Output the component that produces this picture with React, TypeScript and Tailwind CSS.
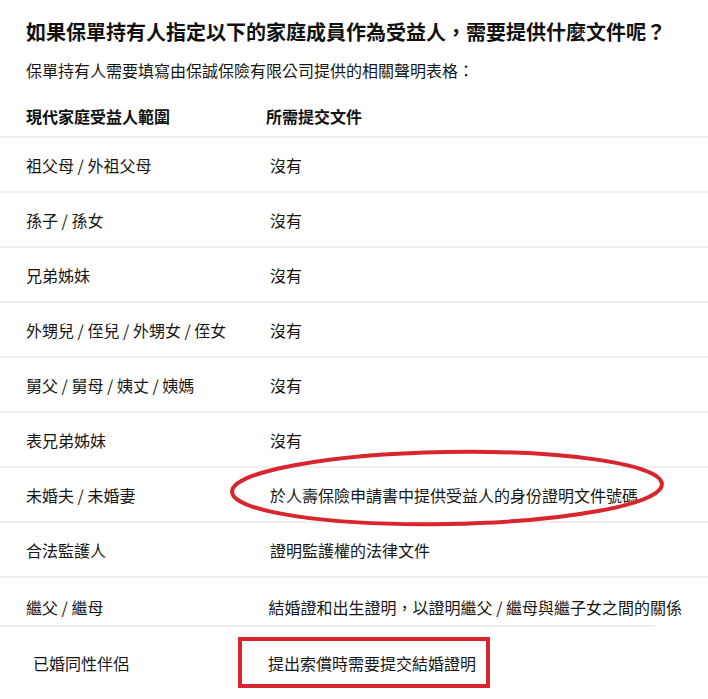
import React from "react";

const rows: [string, string][] = [
  ["祖父母 / 外祖父母", "沒有"],
  ["孫子 / 孫女", "沒有"],
  ["兄弟姊妹", "沒有"],
  ["外甥兒 / 侄兒 / 外甥女 / 侄女", "沒有"],
  ["舅父 / 舅母 / 姨丈 / 姨媽", "沒有"],
  ["表兄弟姊妹", "沒有"],
  ["未婚夫 / 未婚妻", "於人壽保險申請書中提供受益人的身份證明文件號碼"],
  ["合法監護人", "證明監護權的法律文件"],
];

export default function App() {
  return (
    <div
      className="relative w-[708px] h-[699px] overflow-hidden bg-white text-[#161616]"
      style={{ fontFamily: '"Noto Sans CJK TC", "Noto Sans", sans-serif' }}
    >
      <div className="px-[26px] pt-[18px]">
        <h1 className="text-[20px] leading-[28px] font-bold text-[#111]">
          如果保單持有人指定以下的家庭成員作為受益人，需要提供什麼文件呢？
        </h1>
        <p className="mt-[12px] text-[16px] leading-[24px]">
          保單持有人需要填寫由保誠保險有限公司提供的相關聲明表格：
        </p>
      </div>

      <div className="mt-[22px] flex h-[32px] px-[26px] text-[16px] leading-[24px] font-bold text-[#111]">
        <div className="w-[240px]">現代家庭受益人範圍</div>
        <div>所需提交文件</div>
      </div>

      {rows.map(([who, doc]) => (
        <div
          key={who}
          className="flex h-[55px] items-center border-t-2 border-[#eeeeee] px-[26px] text-[16px] leading-[24px]"
        >
          <div className="w-[244px]">{who}</div>
          <div>{doc}</div>
        </div>
      ))}

      <div className="border-t-2 border-[#eeeeee] px-[26px] pt-[17px] pb-[6px] text-[16px] leading-[24px]">
        <div className="flex">
          <div className="w-[243px]">繼父 / 繼母</div>
          <div className="whitespace-nowrap">結婚證和出生證明，以證明繼父 / 繼母與繼子女之間的關係</div>
        </div>
      </div>
      <div className="w-[655px] border-t-2 border-[#eeeeee]" />
      <div className="flex pl-[33px] pt-[24px] text-[16px] leading-[24px]">
        <div className="w-[235px]">已婚同性伴侶</div>
        <div>提出索償時需要提交結婚證明</div>
      </div>

      {/* hand-drawn annotations */}
      <svg
        className="absolute left-[226px] top-[446px]"
        width="444"
        height="86"
        viewBox="0 0 444 86"
      >
        <ellipse
          cx="221"
          cy="42"
          rx="215"
          ry="36"
          fill="none"
          stroke="#d9252d"
          strokeWidth="4"
          transform="rotate(-1 221 42)"
        />
      </svg>
      <div className="absolute left-[238px] top-[637px] h-[51px] w-[252px] border-4 border-[#d9252d]" />
    </div>
  );
}
